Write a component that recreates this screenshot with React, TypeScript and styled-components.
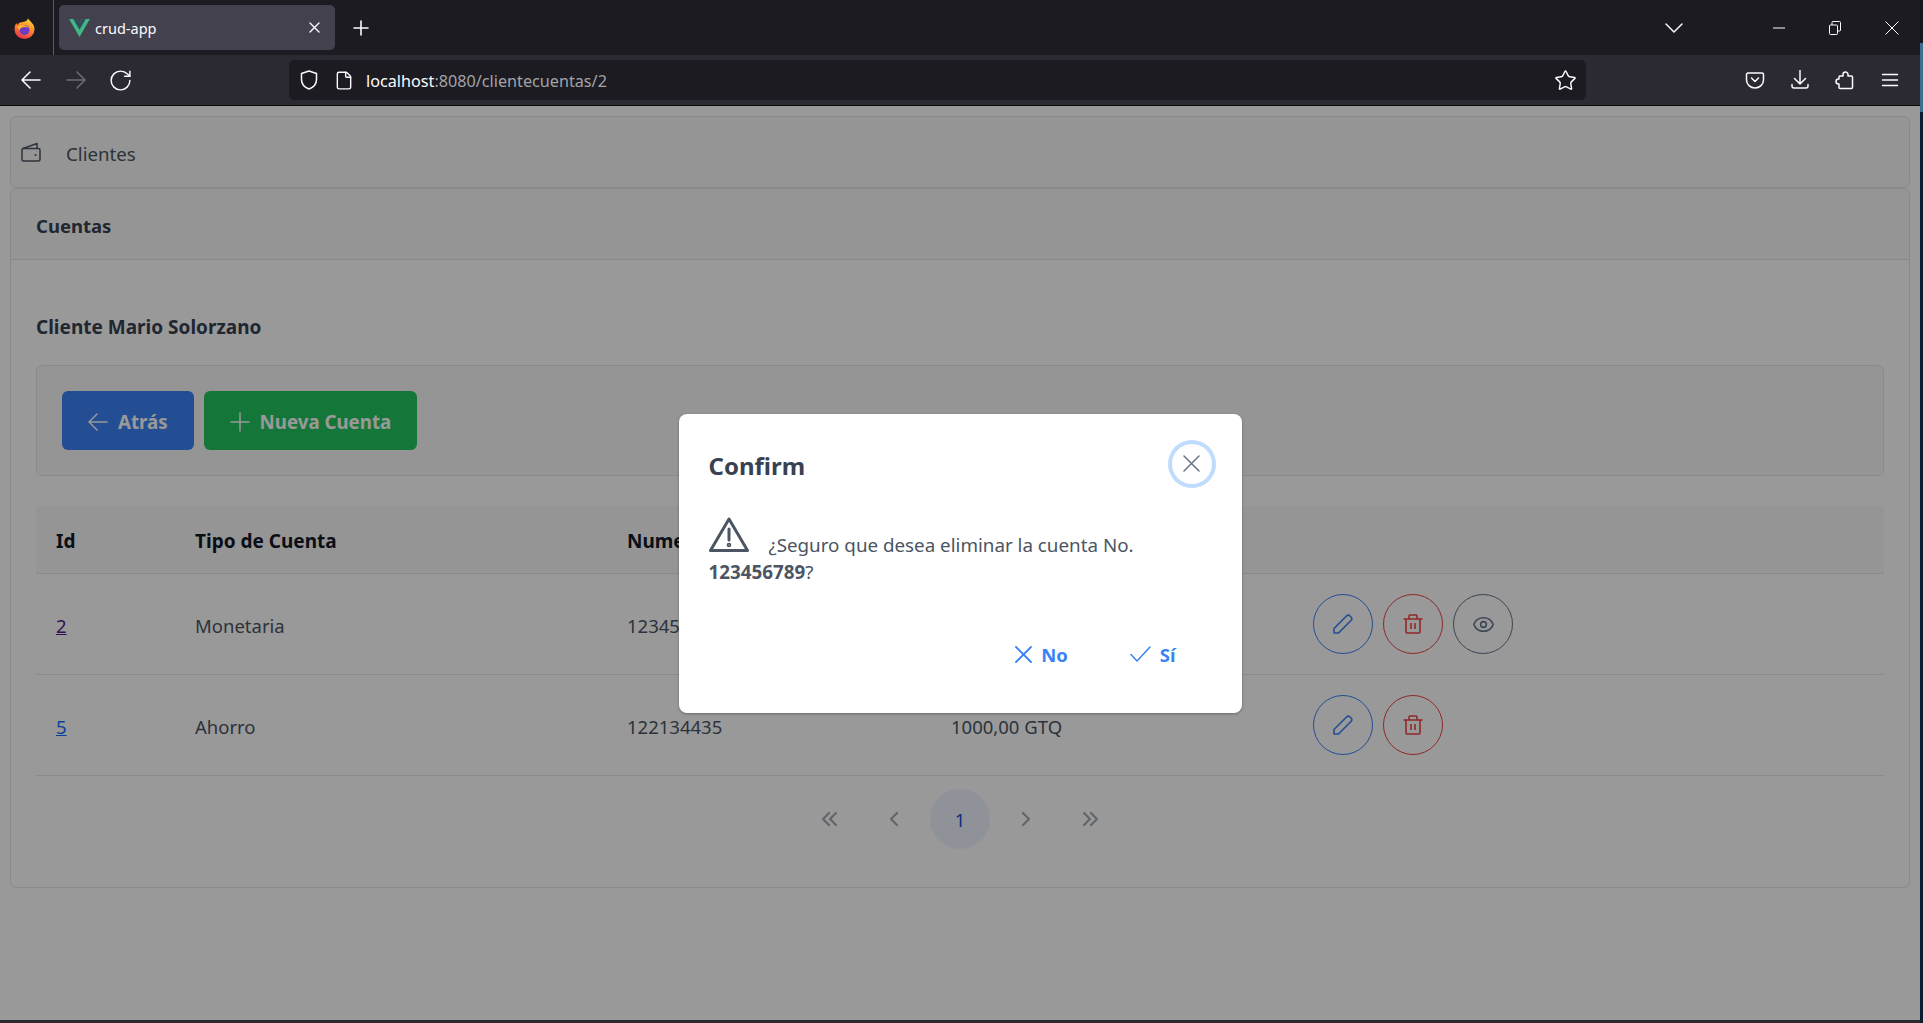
import React from 'react';
import styled, { createGlobalStyle } from 'styled-components';
import { RotateCw, File, Star, ChevronDown, Eye } from 'lucide-react';

const Global = createGlobalStyle`
  html, body { margin: 0; padding: 0; height: 100%; overflow: hidden; }
  body { font-family: "Noto Sans", "Open Sans", sans-serif; }
  * { box-sizing: border-box; }
`;

const Screen = styled.div`
  width: 100vw;
  height: 100vh;
  background: linear-gradient(#14161d 0 43px, #3f6d90 43px 112px, #0a1c30 112px);
`;
const Win = styled.div`
  width: 1920px;
  height: 1023px;
  display: flex;
  flex-direction: column;
  border-bottom: 3px solid #2b2a2f;
`;
const TabBar = styled.div`
  height: 55px;
  flex: none;
  display: flex;
  align-items: flex-start;
  background: #1c1b22;
  color: #fbfbfe;
`;
const LogoCell = styled.div`
  width: 54px;
  height: 55px;
  display: flex;
  align-items: center;
  justify-content: center;
  padding-right: 4px;
  border-right: 1px solid #5b5b66;
`;
const Tab = styled.div`
  width: 276px;
  height: 45px;
  margin: 5px 0 0 5px;
  padding: 0 15px 0 10px;
  display: flex;
  align-items: center;
  gap: 5px;
  border-radius: 5px;
  background: #42414d;
`;
const TabTitle = styled.span`
  flex: 1;
  font-size: 14.5px;
`;
const TabIconCell = styled.div<{ $w: number; $ml?: number }>`
  width: ${p => p.$w}px;
  height: 55px;
  margin-left: ${p => p.$ml ?? 0}px;
  flex: none;
  display: flex;
  align-items: center;
  justify-content: center;
`;
const Spacer = styled.div`
  flex: 1;
`;
const NavBar = styled.div`
  height: 51px;
  flex: none;
  padding: 5px 8px 5px 8px;
  display: flex;
  align-items: center;
  background: #2b2a33;
  border-bottom: 1px solid #0c0c0d;
  color: #fbfbfe;
`;
const NavBtn = styled.div<{ $dim?: boolean }>`
  width: 45px;
  height: 40px;
  flex: none;
  display: flex;
  align-items: center;
  justify-content: center;
  color: ${p => (p.$dim ? '#6f6e76' : '#fbfbfe')};
`;
const UrlBar = styled.div`
  width: 1297px;
  height: 40px;
  margin-left: 146px;
  padding: 0 9px 0 10px;
  display: flex;
  align-items: center;
  border-radius: 5px;
  background: #1c1b22;
`;
const UrlIcon = styled.div`
  width: 20px;
  height: 20px;
  margin-right: 15px;
  display: flex;
  align-items: center;
  justify-content: center;
`;
const UrlText = styled.span`
  flex: 1;
  margin-left: -3px;
  padding-top: 2px;
  font-size: 16.2px;
  color: #a3a3a8;
  b {
    font-weight: 400;
    color: #fbfbfe;
  }
`;
const Page = styled.main`
  position: relative;
  flex: 1;
  padding: 10px 10px 0;
  background: #fff;
  color: #4b5563;
`;
const TopCard = styled.div`
  height: 72px;
  padding: 0 10px;
  display: flex;
  align-items: center;
  gap: 25px;
  border: 1px solid #e5e7eb;
  border-radius: 6px;
  background: #f9f9f9;
  font-size: 18.7px;
  color: #4b5563;
`;
const TopLabel = styled.span`
  padding-top: 3px;
`;
const Card = styled.section`
  border: 1px solid #e5e7eb;
  border-radius: 6px;
`;
const CardHead = styled.div`
  height: 71px;
  padding: 2px 25px 0;
  display: flex;
  align-items: center;
  border-bottom: 1px solid #e5e7eb;
  background: #f9f9f9;
  border-radius: 6px 6px 0 0;
  font-weight: 700;
  font-size: 18.5px;
  color: #374151;
`;
const CardBody = styled.div`
  padding: 25px;
`;
const Heading = styled.h3`
  margin: 30px 0 26px;
  height: 24px;
  line-height: 24px;
  font-size: 19px;
  font-weight: 700;
  color: #374151;
`;
const Toolbar = styled.div`
  padding: 25px;
  display: flex;
  gap: 10px;
  border: 1px solid #e5e7eb;
  border-radius: 6px;
  background: #f9f9f9;
`;
const Button = styled.button<{ $bg: string }>`
  height: 59px;
  padding: 2px 26px 0;
  display: flex;
  align-items: center;
  gap: 10px;
  border: 0;
  border-radius: 6px;
  background: ${p => p.$bg};
  color: #fff;
  font: 700 18.7px "Noto Sans", sans-serif;
`;
const Table = styled.div`
  margin-top: 30px;
`;
const TableRow = styled.div<{ $head?: boolean }>`
  height: ${p => (p.$head ? 68 : 101)}px;
  display: grid;
  grid-template-columns: 139px 432px 324px 362px 1fr;
  align-items: center;
  border-bottom: 1px solid #e5e7eb;
  background: ${p => (p.$head ? '#f8f8f8' : 'transparent')};
  font-size: ${p => (p.$head ? 19 : 18.5)}px;
  font-weight: ${p => (p.$head ? 700 : 400)};
  color: ${p => (p.$head ? '#111827' : '#4b5563')};
`;
const Cell = styled.div`
  padding: 2px 20px 0;
`;
const ActionCell = styled.div`
  padding: 0 20px;
  display: flex;
  gap: 10px;
`;
const IdLink = styled.a<{ $visited?: boolean }>`
  color: ${p => (p.$visited ? '#551a8b' : '#0d6efd')};
  text-decoration: underline;
`;
const RoundBtn = styled.button<{ $c: string }>`
  width: 60px;
  height: 60px;
  padding: 0;
  display: flex;
  align-items: center;
  justify-content: center;
  border: 1px solid ${p => p.$c};
  border-radius: 50%;
  background: transparent;
  color: ${p => p.$c};
`;
const Paginator = styled.div`
  padding: 13px 0;
  display: flex;
  justify-content: center;
  gap: 5px;
`;
const PageBtn = styled.div<{ $active?: boolean }>`
  width: 60px;
  height: 60px;
  display: flex;
  align-items: center;
  justify-content: center;
  border-radius: 50%;
  background: ${p => (p.$active ? '#eff6ff' : 'transparent')};
  color: ${p => (p.$active ? '#1d4ed8' : '#a3a8b0')};
  font-size: 18.5px;
`;
const Overlay = styled.div`
  position: absolute;
  inset: 0;
  display: flex;
  align-items: center;
  justify-content: center;
  background: rgba(0, 0, 0, 0.4);
`;
const Dialog = styled.div`
  width: 563px;
  height: 299px;
  display: flex;
  flex-direction: column;
  border-radius: 8px;
  background: #fff;
  box-shadow: 0 1px 3px rgba(0, 0, 0, 0.3);
`;
const DialogHead = styled.div`
  padding: 30px 30px 0;
  display: flex;
  align-items: center;
  justify-content: space-between;
`;
const DialogTitle = styled.h2`
  margin: 3px 0 0;
  font-size: 24px;
  font-weight: 700;
  color: #374151;
`;
const CloseBtn = styled.button`
  width: 40px;
  height: 40px;
  padding: 0;
  display: flex;
  align-items: center;
  justify-content: center;
  border: 0;
  border-radius: 50%;
  background: #fff;
  color: #6b7280;
  box-shadow: 0 0 0 4px #bfdbfe;
`;
const DialogBody = styled.div`
  flex: 1;
  padding: 33px 30px 0;
  font-size: 18.8px;
  line-height: 27px;
  color: #4b5563;
  svg {
    margin-right: 20px;
    vertical-align: baseline;
  }
  b {
    font-weight: 700;
  }
`;
const DialogFoot = styled.div`
  padding: 0 48px 28px 0;
  display: flex;
  justify-content: flex-end;
  gap: 26px;
`;
const TextBtn = styled.button`
  height: 59px;
  padding: 0 18px 2px;
  display: flex;
  align-items: center;
  gap: 9px;
  border: 0;
  background: transparent;
  color: #3b82f6;
  font: 700 18.5px "Noto Sans", sans-serif;
`;

const Firefox = () => (
  <svg width="21" height="22" viewBox="0 0 21 22">
    <defs>
      <linearGradient id="ff" x1="0.7" y1="0" x2="0.3" y2="1">
        <stop offset="0" stopColor="#ffd83a" />
        <stop offset="0.45" stopColor="#ff8a2b" />
        <stop offset="1" stopColor="#e8304f" />
      </linearGradient>
    </defs>
    <path d="M14 1c.6 2 2 2.600 3.500 4.500C20 8 20.500 10 20.500 12.500a10 9.500 0 0 1-20 0C.5 10 1 8 2.500 6c.2 1 .7 1.500 1.300 2C4.500 6 6 5 8 5.300 10.500 4.500 14 4 14 1z" fill="url(#ff)" />
    <circle cx="10.500" cy="13" r="5" fill="#6e3bc4" />
    <path d="M3 10c2-1.500 4.500-2.500 7.500-1.800 2 .4 3 1.300 4 2.800-1.500-1-3.500-1.300-5.500-.8-2 .5-3 1.500-3.500 2.800C5 12.500 4 11.500 3 10z" fill="#ffb22e" />
  </svg>
);
const Vue = () => (
  <svg width="21" height="18" viewBox="0 0 261.76 226.69">
    <path d="M161.096.001l-30.225 52.351L100.647.001H-.005l130.876 226.688L261.749.001z" fill="#41b883" />
    <path d="M161.096.001l-30.225 52.351L100.647.001H52.346l78.525 136.01L209.398.001z" fill="#34495e" />
  </svg>
);
const Glyph = ({ w, h, d, sw = 1.5 }: { w: number; h: number; d: string; sw?: number }) => (
  <svg width={w} height={h} viewBox={`0 0 ${w} ${h}`} fill="none" stroke="currentColor" strokeWidth={sw} strokeLinecap="round" strokeLinejoin="round">
    <path d={d} />
  </svg>
);
const ArrowBack = ({ sw }: { sw?: number }) => <Glyph w={20} h={18} sw={sw} d="M1 9h18M9 1L1 9l8 8" />;
const ArrowFwd = () => <Glyph w={20} h={18} d="M1 9h18M11 1l8 8-8 8" />;
const Cross = ({ s, sw }: { s: number; sw?: number }) => <Glyph w={s} h={s} sw={sw} d={`M1 1L${s - 1} ${s - 1}M${s - 1} 1L1 ${s - 1}`} />;
const PlusMark = ({ s, sw }: { s: number; sw?: number }) => <Glyph w={s} h={s} sw={sw} d={`M${s / 2} 1V${s - 1}M1 ${s / 2}H${s - 1}`} />;
const CheckMark = () => <Glyph w={21} h={16} d="M1 8.500L7 15 20 1" />;
const ShieldMark = () => <Glyph w={18} h={20} d="M9 1L1.500 3.500V9.500C1.500 14 5 17.500 9 19 13 17.500 16.500 14 16.500 9.500V3.500z" />;

const Chrome = ({ size = 20, children }: { size?: number; children: React.ReactNode }) => (
  <svg width={size} height={size} viewBox="0 0 20 20" fill="none" stroke="currentColor" strokeWidth="1.500" strokeLinecap="round" strokeLinejoin="round">
    {children}
  </svg>
);
const Pocket = () => (
  <Chrome>
    <path d="M3 3h14a1.500 1.500 0 0 1 1.500 1.500V10a8.500 8 0 0 1-17 0V4.500A1.500 1.500 0 0 1 3 3z" />
    <path d="M6.500 8l3.500 3.500L13.500 8" />
  </Chrome>
);
const DownloadIcon = () => (
  <Chrome>
    <path d="M10 0.500v13.500M4.500 8.500L10 14l5.500-5.500M2 14.500v1.500a2 2 0 0 0 2 2h12a2 2 0 0 0 2-2v-1.500" />
  </Chrome>
);
const PuzzleIcon = () => (
  <Chrome>
    <path d="M8 6V4.500a2.500 2.500 0 0 1 5 0V6h3.500a1 1 0 0 1 1 1v10.500a1 1 0 0 1-1 1H5a1 1 0 0 1-1-1V14h-.5a2.500 2.500 0 0 1 0-5H4V7a1 1 0 0 1 1-1z" />
  </Chrome>
);
const MenuIcon = () => (
  <Chrome>
    <path d="M2.500 4.500h15M2.500 10h15M2.500 15.500h15" />
  </Chrome>
);
const WinMin = () => (
  <svg width="12" height="12" viewBox="0 0 12 12"><path d="M0 6h12" stroke="#fbfbfe" /></svg>
);
const WinRestore = () => (
  <svg width="12" height="14" viewBox="0 0 12 14" fill="none" stroke="#fbfbfe">
    <rect x="0.500" y="4" width="8" height="9.500" rx="1" />
    <path d="M3 4V1.500a1 1 0 0 1 1-1h6.500a1 1 0 0 1 1 1V9a1 1 0 0 1-1 1H8.500" />
  </svg>
);
const WinClose = () => (
  <svg width="14" height="14" viewBox="0 0 14 14"><path d="M.5.5l13 13M13.500.5l-13 13" stroke="#fbfbfe" /></svg>
);
const Wallet = () => (
  <Chrome>
    <path d="M2 6.500L16 1.500V6.500" />
    <rect x="1" y="6.500" width="18" height="12.500" rx="1.500" />
    <circle cx="14.500" cy="13" r="1" fill="currentColor" stroke="none" />
  </Chrome>
);
const Pencil = () => (
  <svg width="20" height="20" viewBox="0 0 20 20" fill="none" stroke="currentColor" strokeWidth="1.600" strokeLinejoin="round">
    <path d="M1 19v-4.500L13.500 2a2.500 2.500 0 0 1 3.500 0l1 1a2.500 2.500 0 0 1 0 3.500L5.500 19z" />
  </svg>
);
const Trash = () => (
  <svg width="20" height="20" viewBox="0 0 20 20" fill="none" stroke="currentColor" strokeWidth="1.600" strokeLinejoin="round">
    <path d="M0.500 5h19M3 5v13a1 1 0 0 0 1 1h12a1 1 0 0 0 1-1V5M6 5V2a1 1 0 0 1 1-1h6a1 1 0 0 1 1 1v3M8 9v6M12 9v6" />
  </svg>
);
const Warning = () => (
  <svg width="40" height="35" viewBox="0 0 40 35" fill="none" stroke="#4b5563" strokeWidth="3" strokeLinejoin="round" strokeLinecap="round">
    <path d="M20 2L38.500 33.500h-37z" />
    <path d="M20 12v11" />
    <circle cx="20" cy="28" r="0.800" fill="#4b5563" />
  </svg>
);
const Angle = ({ d }: { d: string }) => (
  <svg width="18" height="16" viewBox="0 0 18 16" fill="none" stroke="currentColor" strokeWidth="2.200" strokeLinecap="round" strokeLinejoin="round">
    <path d={d} />
  </svg>
);

export default function App() {
  return (
    <Screen>
      <Global />
      <Win>
        <TabBar>
          <LogoCell><Firefox /></LogoCell>
          <Tab>
            <Vue />
            <TabTitle>crud-app</TabTitle>
            <Cross s={11} sw={1.4} />
          </Tab>
          <TabIconCell $w={40} $ml={6}><PlusMark s={16} sw={1.6} /></TabIconCell>
          <Spacer />
          <TabIconCell $w={40}><ChevronDown size={32} strokeWidth={1.1} /></TabIconCell>
          <TabIconCell $w={56} />
          <TabIconCell $w={57}><WinMin /></TabIconCell>
          <TabIconCell $w={56}><WinRestore /></TabIconCell>
          <TabIconCell $w={57}><WinClose /></TabIconCell>
        </TabBar>
        <NavBar>
          <NavBtn><ArrowBack sw={1.6} /></NavBtn>
          <NavBtn $dim><ArrowFwd /></NavBtn>
          <NavBtn><RotateCw size={25} strokeWidth={1.4} /></NavBtn>
          <UrlBar>
            <UrlIcon><ShieldMark /></UrlIcon>
            <UrlIcon><File size={21} strokeWidth={1.7} /></UrlIcon>
            <UrlText><b>localhost</b>:8080/clientecuentas/2</UrlText>
            <Star size={23} strokeWidth={1.5} />
          </UrlBar>
          <Spacer />
          <NavBtn><Pocket /></NavBtn>
          <NavBtn><DownloadIcon /></NavBtn>
          <NavBtn><PuzzleIcon /></NavBtn>
          <NavBtn><MenuIcon /></NavBtn>
        </NavBar>
        <Page>
          <TopCard><Wallet /><TopLabel>Clientes</TopLabel></TopCard>
          <Card>
            <CardHead>Cuentas</CardHead>
            <CardBody>
              <Heading>Cliente Mario Solorzano</Heading>
              <Toolbar>
                <Button $bg="#3b82f6"><ArrowBack />Atrás</Button>
                <Button $bg="#22c55e"><PlusMark s={20} />Nueva Cuenta</Button>
              </Toolbar>
              <Table>
                <TableRow $head>
                  <Cell>Id</Cell>
                  <Cell>Tipo de Cuenta</Cell>
                  <Cell>Numero de Cuenta</Cell>
                  <Cell>Saldo</Cell>
                  <Cell />
                </TableRow>
                <TableRow>
                  <Cell><IdLink $visited href="#">2</IdLink></Cell>
                  <Cell>Monetaria</Cell>
                  <Cell>123456789</Cell>
                  <Cell>1000,00 GTQ</Cell>
                  <ActionCell>
                    <RoundBtn $c="#3b82f6"><Pencil /></RoundBtn>
                    <RoundBtn $c="#ef4444"><Trash /></RoundBtn>
                    <RoundBtn $c="#64748b"><Eye size={23} strokeWidth={1.6} /></RoundBtn>
                  </ActionCell>
                </TableRow>
                <TableRow>
                  <Cell><IdLink href="#">5</IdLink></Cell>
                  <Cell>Ahorro</Cell>
                  <Cell>122134435</Cell>
                  <Cell>1000,00 GTQ</Cell>
                  <ActionCell>
                    <RoundBtn $c="#3b82f6"><Pencil /></RoundBtn>
                    <RoundBtn $c="#ef4444"><Trash /></RoundBtn>
                  </ActionCell>
                </TableRow>
              </Table>
              <Paginator>
                <PageBtn><Angle d="M8 2L2 8l6 6M15 2L9 8l6 6" /></PageBtn>
                <PageBtn><Angle d="M11 2L5 8l6 6" /></PageBtn>
                <PageBtn $active>1</PageBtn>
                <PageBtn><Angle d="M7 2l6 6-6 6" /></PageBtn>
                <PageBtn><Angle d="M3 2l6 6-6 6M10 2l6 6-6 6" /></PageBtn>
              </Paginator>
            </CardBody>
          </Card>
          <Overlay>
            <Dialog>
              <DialogHead>
                <DialogTitle>Confirm</DialogTitle>
                <CloseBtn><Cross s={17} /></CloseBtn>
              </DialogHead>
              <DialogBody>
                <Warning />¿Seguro que desea eliminar la cuenta No. <b>123456789</b>?
              </DialogBody>
              <DialogFoot>
                <TextBtn><Cross s={17} sw={1.8} />No</TextBtn>
                <TextBtn><CheckMark />Sí</TextBtn>
              </DialogFoot>
            </Dialog>
          </Overlay>
        </Page>
      </Win>
    </Screen>
  );
}
